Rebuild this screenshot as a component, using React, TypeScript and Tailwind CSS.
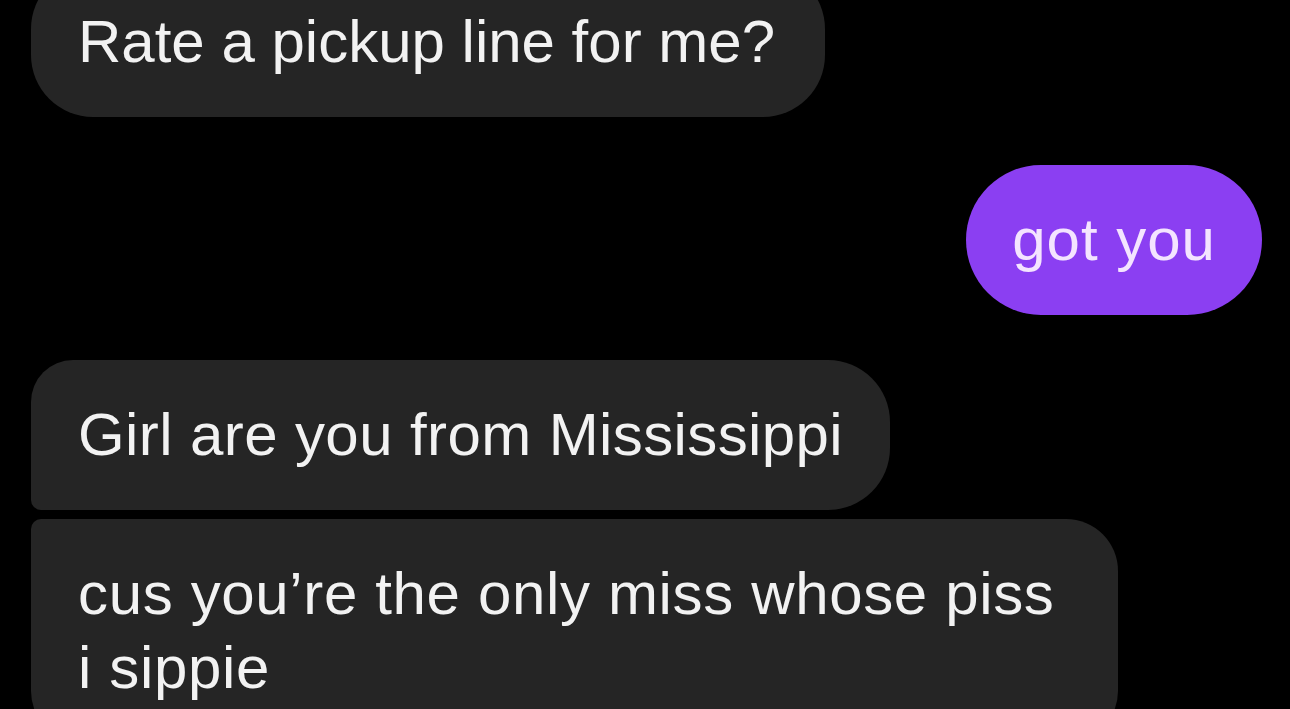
const textStyle = "text-[60px] leading-[74px] font-['Liberation_Sans',Arial,sans-serif]";

const App = () => {
  return (
    <div className="h-[709px] w-[1290px] overflow-hidden bg-black">
      <div className={`flex flex-col pl-[31px] pr-[28px] ${textStyle}`}>
        <div className="self-start -mt-[33px] rounded-[62px] bg-[#252525] pl-[47px] pr-[50px] py-[38px] text-[#f2f2f2]">
          Rate a pickup line for me?
        </div>

        <div className="self-end mt-[48px] rounded-full bg-[#8b3ff2] px-[46px] py-[38px] tracking-[1px] text-[#f4e4ff]">
          got you
        </div>

        <div className="self-start mt-[45px] rounded-tl-[42px] rounded-bl-[10px] rounded-tr-[62px] rounded-br-[62px] bg-[#252525] px-[47px] py-[38px] tracking-[0.4px] text-[#f2f2f2]">
          Girl are you from Mississippi
        </div>

        <div className="self-start mt-[9px] max-w-[1087px] rounded-tl-[10px] rounded-tr-[52px] rounded-bl-[52px] rounded-br-[52px] bg-[#252525] px-[47px] py-[38px] tracking-[0.65px] text-[#f2f2f2]">
          cus you’re the only miss whose piss i sippie
        </div>
      </div>
    </div>
  );
};

export default App;
